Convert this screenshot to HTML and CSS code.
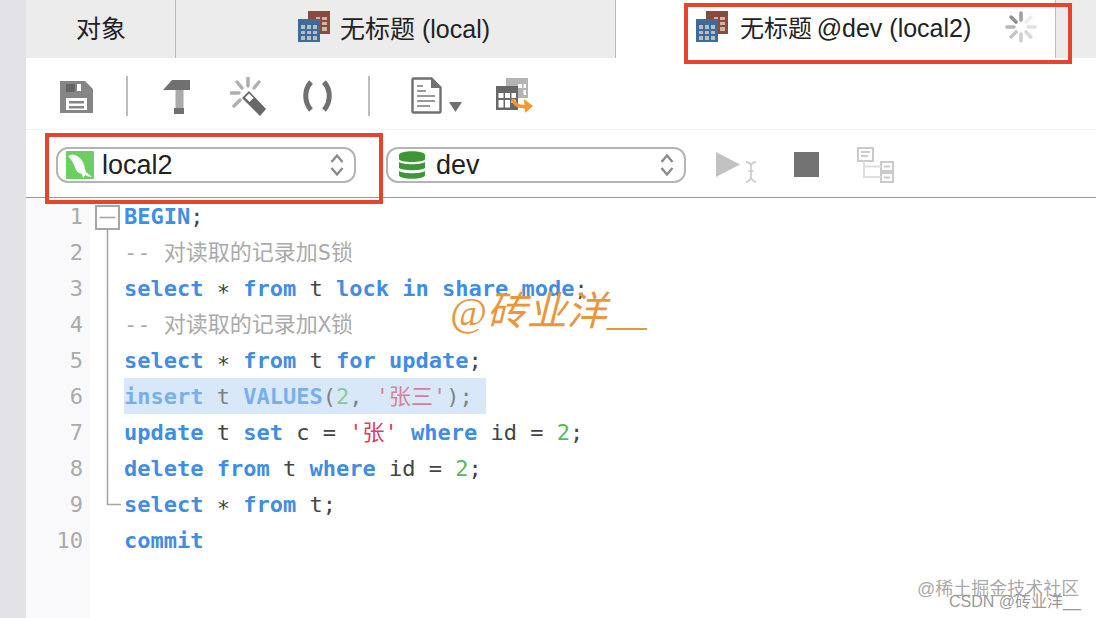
FILE: index.html
```html
<!DOCTYPE html>
<html lang="zh">
<head>
<meta charset="utf-8">
<title>无标题 @dev (local2)</title>
<link rel="stylesheet" href="styles.css">
</head>
<body>
<svg class="defs" width="0" height="0" aria-hidden="true">
  <symbol id="tbl" viewBox="0 0 32 32">
    <rect x="10" y="0" width="22" height="23" fill="#8b4a3d"/>
    <path d="M18 6h4v3h-4zM24 6h5v3h-5zM24 11h5v3h-5zM24 16h5v4h-5z" fill="#c9b3ab"/>
    <rect x="0" y="8" width="22" height="23" fill="#3f6b9b"/>
    <path d="M3 14h4v4H3zM9 14h4v4H9zM15 14h4v4h-4zM3 20h4v3H3zM9 20h4v3H9zM15 20h4v3h-4zM3 25h4v4H3zM9 25h4v4H9zM15 25h4v4h-4z" fill="#b9bcc0"/>
  </symbol>
  <symbol id="updown" viewBox="0 0 14 24">
    <path d="M1.5 9 7 2.500 12.500 9M1.500 15 7 21.500 12.500 15" fill="none" stroke="#8a8a8a" stroke-width="2.400"/>
  </symbol>
</svg>
<div class="app">
  <div class="strip"></div>
  <div class="main">
    <div class="tabs">
      <div class="tab tab-obj">对象</div>
      <div class="tab tab-q1"><svg class="tbl-icon"><use href="#tbl"/></svg><span>无标题 (local)</span></div>
      <div class="tab tab-q2"><svg class="tbl-icon"><use href="#tbl"/></svg><span><span class="tight">无标题 </span>@dev (local2)</span>
        <svg class="spinner" viewBox="0 0 32 32" fill="none" stroke-width="3.600" stroke-linecap="round">
          <path d="M16 2v7" stroke="#a0a0a0"/>
          <path d="M25.900 6.100 21 11" stroke="#ececec"/>
          <path d="M30 16h-7" stroke="#e2e2e2"/>
          <path d="M25.900 25.900 21 21" stroke="#d8d8d8"/>
          <path d="M16 30v-7" stroke="#cfcfcf"/>
          <path d="M6.100 25.900 11 21" stroke="#c6c6c6"/>
          <path d="M2 16h7" stroke="#b8b8b8"/>
          <path d="M6.100 6.100 11 11" stroke="#909090"/>
        </svg>
      </div>
      <div class="tab-rest"></div>
    </div>

    <div class="toolbar">
      <svg class="ico save" width="33" height="32" viewBox="0 0 33 32">
        <path d="M0 0h25l8 8v24H0z" fill="#868686"/>
        <path d="M17 3h4v7h-4zM6 17h21v12H6z" fill="#fff"/>
        <path d="M6 3h9v8H6z" fill="#666"/>
        <path d="M9 20h15v2.500H9zM9 25h15v2.500H9z" fill="#868686"/>
      </svg>
      <span class="sep sep-a"></span>
      <svg class="ico hammer" width="27" height="34" viewBox="0 0 27 34">
        <path d="M9 0h18v10H0z" fill="#707070"/>
        <path d="M12.500 10h8v18h-8z" fill="#aaa"/>
        <path d="M11 28h10v6H11z" fill="#707070"/>
      </svg>
      <svg class="ico wand" width="36" height="39" viewBox="0 0 36 39">
        <path d="M18 1v8M7 5l5 6M29 5l-5 6M1 16h8M4 29l6-6" fill="none" stroke="#b0b0b0" stroke-width="3.500" stroke-linecap="round"/>
        <path d="M12 21l7-7 17 18-6 7z" fill="#686868"/>
        <path d="M15 20.500l4-4 4.500 4.500-4 4z" fill="#fff"/>
      </svg>
      <svg class="ico parens" width="29" height="32" viewBox="0 0 29 32">
        <path d="M8 2C1 10 1 22 8 30M21 2c7 8 7 20 0 28" fill="none" stroke="#707070" stroke-width="5"/>
      </svg>
      <span class="sep sep-b"></span>
      <svg class="ico doc" width="31" height="37" viewBox="0 0 31 37">
        <path d="M2.500 1.500h18l9 9v24a1 1 0 0 1-1 1h-26a1 1 0 0 1-1-1v-32a1 1 0 0 1 1-1z" fill="#fff" stroke="#707070" stroke-width="2.400"/>
        <path d="M20 1.500l9.500 9.500H20z" fill="#707070"/>
        <path d="M6 9h6M6 14h9M6 19h18M6 24h18M6 29h13" stroke="#9a9a9a" stroke-width="2"/>
      </svg>
      <svg class="ico caret" width="13" height="10" viewBox="0 0 13 10"><path d="M0 0h13L6.500 10z" fill="#707070"/></svg>
      <svg class="ico xfer" width="37" height="36" viewBox="0 0 37 36">
        <path d="M10 0h22v20H10z" fill="#b4b4b4"/>
        <path d="M22 6h4v4h-4zM27.500 6H30v4h-2.500zM27.500 12H30v5h-2.500z" fill="#fff"/>
        <path d="M0 8h22v24H0z" fill="#686868"/>
        <path d="M2.500 15h5v5h-5zM9 15h5v5H9zM15.500 15h4.500v5h-4.500zM2.500 22h5v7.500h-5zM9 22h5v7.500H9zM15.500 22h4.500v3h-4.500z" fill="#fff"/>
        <path d="M17 21c1 6 6 8 13 7.500" fill="none" stroke="#f09a30" stroke-width="3.600"/>
        <path d="M28 21l9 7-8 7z" fill="#f09a30"/>
      </svg>
    </div>

    <div class="selbar">
      <div class="select sel-conn">
        <svg class="sel-icon" width="28" height="28" viewBox="0 0 28 28">
          <rect width="28" height="28" rx="1" fill="#6ccf62"/>
          <path d="M2 5c3-2 6-2 9 0 4 2 6 5 7 9 1 3 1 5 2 7l6 5c-3 0-5-1-7-2l-2 3-1-4c-4-1-6-3-7-7-1-3-4-8-7-11z" fill="#fff"/>
        </svg>
        <span class="sel-text">local2</span>
        <svg class="updown" width="14" height="24"><use href="#updown"/></svg>
      </div>
      <div class="select sel-db">
        <svg class="sel-icon" width="26" height="28" viewBox="0 0 26 28">
          <path d="M0 4c0-5 26-5 26 0v4C26 12 0 12 0 8z" fill="#3f9636"/>
          <path d="M0 11c4 3 22 3 26 0v6c-4 3-22 3-26 0z" fill="#3f9636"/>
          <path d="M0 20c4 3 22 3 26 0v4c0 5-26 5-26 0z" fill="#3f9636"/>
        </svg>
        <span class="sel-text">dev</span>
        <svg class="updown" width="14" height="24"><use href="#updown"/></svg>
      </div>
      <svg class="ico run" width="40" height="31" viewBox="0 0 40 31">
        <path d="M0 0l24 12.500L0 25z" fill="#c2c2c2"/>
        <path d="M30 10c2 0 4 1 5 3 1-2 3-3 5-3M35 13v6h-2.500h5M35 19v6M30 30c2 0 4-2 5-5 1 3 3 5 5 5" fill="none" stroke="#cfcfcf" stroke-width="1.800"/>
      </svg>
      <span class="stop"></span>
      <svg class="ico tree" width="37" height="36" viewBox="0 0 37 36">
        <path d="M1 1h15v13H1zM24 15h12v9H24zM24 26h12v9H24z" fill="#fff" stroke="#cacaca" stroke-width="2"/>
        <path d="M4 5h9M4 9h7M27 19.500h6M27 30.500h6" stroke="#cacaca" stroke-width="1.800"/>
        <path d="M7 14v16h17M7 19.500h17" fill="none" stroke="#dedede" stroke-width="2"/>
      </svg>
    </div>

    <div class="editor">
      <div class="gutter">
        <div class="num-row">1</div><div class="num-row">2</div><div class="num-row">3</div><div class="num-row">4</div><div class="num-row">5</div><div class="num-row">6</div><div class="num-row">7</div><div class="num-row">8</div><div class="num-row">9</div><div class="num-row">10</div>
      </div>
      <div class="fold">
        <svg width="34" height="320" viewBox="0 0 34 320">
          <path d="M6 8h23v23H6z" fill="#fff" stroke="#a6a6a6" stroke-width="2"/>
          <path d="M9.500 19.500h16" stroke="#a6a6a6" stroke-width="1.600"/>
          <path d="M17.500 31v275.500H31" fill="none" stroke="#a6a6a6" stroke-width="1.600"/>
        </svg>
      </div>
      <div class="code">
        <div class="line"><b>BEGIN</b>;</div>
        <div class="line cm">-- 对读取的记录加S锁</div>
        <div class="line"><b>select</b> <span class="ast">*</span> <b>from</b> t <b>lock</b> <b>in</b> <b>share</b> <b>mode</b>;</div>
        <div class="line cm">-- 对读取的记录加X锁</div>
        <div class="line"><b>select</b> <span class="ast">*</span> <b>from</b> t <b>for</b> <b>update</b>;</div>
        <div class="line sel"><span class="dim"><b>insert</b> t <b>VALUES</b>(<i class="num">2</i>, <i class="str">'张三'</i>);</span></div>
        <div class="line"><b>update</b> t <b>set</b> c = <i class="str">'张'</i> <b>where</b> id = <i class="num">2</i>;</div>
        <div class="line"><b>delete</b> <b>from</b> t <b>where</b> id = <i class="num">2</i>;</div>
        <div class="line"><b>select</b> <span class="ast">*</span> <b>from</b> t;</div>
        <div class="line"><b>commit</b></div>
      </div>
    </div>
  </div>

  <span class="mark mark-tab"></span>
  <span class="mark mark-conn"></span>
  <span class="wm-author">@砖业洋__</span>
  <span class="wm-juejin">@稀土掘金技术社区</span>
  <span class="wm-csdn">CSDN @砖业洋__</span>
</div>
</body>
</html>
```

FILE: styles.css
```css
* { box-sizing: border-box; }
html, body { margin: 0; padding: 0; height: 100%; background: #fff; }
body { overflow: hidden; font-family: "Liberation Sans", "Noto Sans CJK SC", sans-serif; color: #222; }
.defs { display: block; width: 0; height: 0; }

.app { position: relative; display: flex; width: 1096px; height: 618px; overflow: hidden; }
.strip { width: 26px; flex: none; background: #e3e2e6; }
.main { flex: 1; display: flex; flex-direction: column; min-width: 0; }

.tabs { display: flex; height: 58px; flex: none; background: #ececec; font-size: 25px; }
.tab { display: flex; align-items: center; height: 100%; padding-bottom: 5px; border-right: 1px solid #bcbcbc; white-space: nowrap; }
.tab-obj { width: 150px; padding-left: 50px; }
.tab-q1 { width: 440px; padding-left: 122px; gap: 10px; }
.tab-q2 { width: 440px; padding-left: 80px; gap: 12px; background: #fff; }
.tab-rest { flex: 1; }
.tight { font-size: 24px; margin-right: -2px; }
.tbl-icon { width: 32px; height: 32px; flex: none; }
.spinner { width: 32px; height: 32px; margin-left: 22px; flex: none; }

.toolbar { display: flex; align-items: center; height: 72px; flex: none; padding-left: 34px; padding-top: 4px; border-bottom: 1px solid #f3f3f3; }
.ico { display: block; flex: none; }
.sep { display: block; width: 2px; height: 40px; background: #bdbdbd; flex: none; }
.sep-a { margin-left: 33px; }
.sep-b { margin-left: 36px; }
.save { margin-top: 3px; }
.hammer { margin-left: 35px; margin-top: 3px; }
.wand { margin-left: 40px; margin-top: 1px; }
.parens { margin-left: 37px; }
.doc { margin-left: 41px; }
.caret { margin-left: 7px; margin-top: 22px; }
.xfer { margin-left: 34px; }

.selbar { display: flex; align-items: center; height: 68px; flex: none; padding-left: 30px; padding-top: 2px; border-bottom: 1px solid #999; }
.select { display: flex; align-items: center; width: 300px; height: 36px; border: 2px solid #b4b4b4; border-radius: 12px; font-size: 27px; color: #222; }
.sel-conn { padding-left: 8px; }
.sel-db { margin-left: 30px; padding-left: 11px; }
.sel-icon { flex: none; display: block; }
.sel-text { padding-top: 2px; }
.sel-conn .sel-text { margin-left: 8px; }
.sel-db .sel-text { margin-left: 11px; }
.updown { margin-left: auto; margin-right: 10px; flex: none; display: block; }
.run { margin-left: 30px; margin-top: 5px; }
.stop { display: block; width: 25px; height: 25px; margin-left: 38px; background: #727272; flex: none; }
.tree { margin-left: 38px; }

.editor { flex: 1; display: flex; min-height: 0; font-family: "DejaVu Sans Mono", "Noto Sans CJK SC", monospace; font-size: 22px; line-height: 36px; }
.gutter { width: 64px; flex: none; padding-right: 7px; text-align: right; background: #f9f9fb; color: #aaa; }
.num-row { height: 36px; padding-top: 1px; }
.fold { width: 34px; flex: none; }
.fold svg { display: block; }
.code { flex: 1; color: #444; }
.line { height: 36px; padding-top: 1px; white-space: pre; }
.line b { font-weight: 700; color: #3f8de4; }
.line i { font-style: normal; }
.cm { color: #aaa; }
.ast { vertical-align: -4px; }
.num { color: #58b85c; }
.str { color: #d8405f; }
.sel { width: 362px; background: #d8e8f9; }
.dim { opacity: 0.62; }

.mark { position: absolute; border: 4px solid #e5452b; }
.mark-tab { left: 684px; top: 3px; width: 388px; height: 61px; }
.mark-conn { left: 45px; top: 133px; width: 338px; height: 71px; }

.wm-author { position: absolute; left: 450px; top: 289px; font-family: "Liberation Serif", "Noto Sans CJK SC", serif; font-style: italic; font-size: 40px; line-height: 46px; color: #e8973e; white-space: nowrap; }
.wm-juejin { position: absolute; left: 917px; top: 578px; font-size: 18px; line-height: 22px; color: #aaa; white-space: nowrap; }
.wm-csdn { position: absolute; left: 949px; top: 592px; font-size: 16px; line-height: 19px; color: #999; white-space: nowrap; }
```
